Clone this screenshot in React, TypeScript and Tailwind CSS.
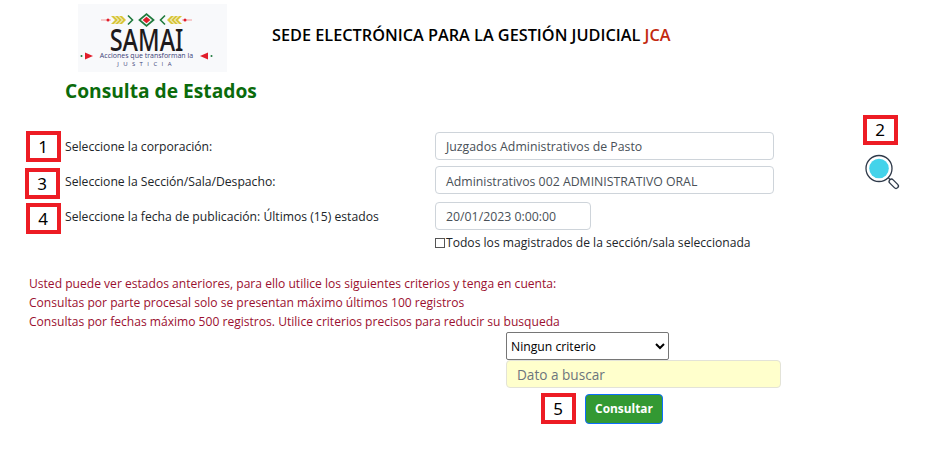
import React from 'react';

const FONT = "font-['Open_Sans','Noto_Sans',sans-serif]";

function NumBox({ n, className = '' }: { n: string; className?: string }) {
  return (
    <div className={`w-[35px] h-[31px] border-[4px] border-[#ed1c24] bg-white flex items-end justify-center shrink-0 text-[17px] leading-[24px] text-black font-['Noto_Sans',sans-serif] ${className}`}>
      <span className="translate-y-[1px] -translate-x-[0.5px]">{n}</span>
    </div>
  );
}

function Arrows({ flip = false }: { flip?: boolean }) {
  return (
    <svg width="33" height="12" viewBox="0 0 33 12" className={flip ? '-scale-x-100' : ''}>
      <path d="M0 6h10" stroke="#f29a9a" strokeWidth="1" />
      <circle cx="7" cy="6" r="1.500" fill="#e11d2a" />
      <path d="M10 2l4 4-4 4h3l4-4-4-4zM14 2l4 4-4 4h3l4-4-4-4zM18 2l4 4-4 4h3l4-4-4-4z" fill="#d9c63a" />
      <path d="M27 1.500l4.500 4.500-4.500 4.500" fill="none" stroke="#1f7a3d" strokeWidth="1.600" />
    </svg>
  );
}

function Logo() {
  return (
    <div className="w-[149px] h-[68px] bg-[#f8f9fb] flex flex-col items-center pt-[9px]">
      <div className="flex items-center h-[14px] gap-[3px] -translate-x-[6px]">
        <Arrows />
        <svg width="19" height="14" viewBox="0 0 20 15">
          <path d="M10 0l9 7.500-9 7.500-9-7.500z" fill="#1f7a3d" />
          <path d="M10 2.500l6 5-6 5-6-5z" fill="#f8f9fb" />
          <path d="M10 4l4.200 3.500L10 11 5.800 7.500z" fill="#e11d2a" />
        </svg>
        <Arrows flip />
      </div>
      <div className="text-[31px] leading-[26px] -mt-[1px] text-[#1d1a1c] font-medium font-['Noto_Sans',sans-serif] scale-x-[0.76] -translate-x-[6px]">SAMAI</div>
      <div className="flex items-center gap-[6px] h-[8px] -translate-x-[6px]">
        <svg width="14" height="8" viewBox="0 0 14 8">
          <circle cx="1.500" cy="4" r="1" fill="#1f7a3d" />
          <path d="M5 0.500l8 3.500-8 3.500z" fill="#e11d2a" />
        </svg>
        <span className="text-[7px] leading-[8px] text-[#3b3f78] whitespace-nowrap">Acciones que transforman la</span>
        <svg width="14" height="8" viewBox="0 0 14 8">
          <circle cx="12.500" cy="4" r="1" fill="#1f7a3d" />
          <path d="M9 0.500l-8 3.500 8 3.500z" fill="#e11d2a" />
        </svg>
      </div>
      <div className="text-[6px] leading-[7px] mt-[1px] tracking-[4.400px] text-[#3b3f78] -translate-x-[6px]">JUSTICIA</div>
    </div>
  );
}

function Magnifier() {
  return (
    <svg width="37" height="37" viewBox="0 0 37 37">
      <circle cx="15" cy="14.500" r="13" fill="#fff" stroke="#2f3a4a" strokeWidth="1.300" />
      <circle cx="15" cy="14.500" r="9.800" fill="#44d3ea" />
      <path d="M24.500 24l3 3" stroke="#2f3a4a" strokeWidth="1.300" />
      <path d="M27.500 27.500l4.500 4.500" stroke="#2f3a4a" strokeWidth="6" strokeLinecap="round" />
      <path d="M27.500 27.500l4.500 4.500" stroke="#fff" strokeWidth="3.400" strokeLinecap="round" />
    </svg>
  );
}

const rowClass = 'text-[12.170px] leading-[18px] text-[#212529]';
const inputClass = 'h-[28px] border border-[#ced4da] rounded-[4px] bg-white pl-[10px] flex items-center text-[12.300px] text-[#495057]';

export default function App() {
  return (
    <div className={`w-[936px] h-[449px] bg-white overflow-hidden pt-[4px] ${FONT}`}>
      {/* Header */}
      <header className="flex pl-[78px] h-[68px]">
        <Logo />
        <h1 className="ml-[45px] mt-[20px] text-[16.280px] leading-[22px] font-semibold text-black whitespace-nowrap">
          SEDE ELECTRÓNICA PARA LA GESTIÓN JUDICIAL <span className="text-[#c2290e]">JCA</span>
        </h1>
      </header>
      <h2 className="ml-[65px] mt-[4px] text-[19.200px] leading-[30px] font-bold text-[#0b6b0b]">Consulta de Estados</h2>

      {/* Form */}
      <div className="flex mt-[19px]">
        <div className="w-[435px] pl-[26px] shrink-0 pt-[6px]">
          <div className="flex items-start gap-[4px] h-[37px]">
            <NumBox n="1" />
            <span className={`${rowClass} mt-[7px]`}>Seleccione la corporación:</span>
          </div>
          <div className="flex items-start gap-[5px] h-[35px] -ml-[1px]">
            <NumBox n="3" />
            <span className={`${rowClass} mt-[5px]`}>Seleccione la Sección/Sala/Despacho:</span>
          </div>
          <div className="flex items-start gap-[4px]">
            <NumBox n="4" />
            <span className={`${rowClass} mt-[5px]`}>Seleccione la fecha de publicación: Últimos (15) estados</span>
          </div>
        </div>
        <div className="w-[339px] shrink-0 pt-[7px] flex flex-col">
          <div className={`${inputClass} pt-[3px]`}>Juzgados Administrativos de Pasto</div>
          <div className={`${inputClass} mt-[6px] pt-[4px]`}>Administrativos 002 ADMINISTRATIVO ORAL</div>
          <div className={`${inputClass} mt-[8px] w-[156px] pt-[3px]`}>20/01/2023 0:00:00</div>
          <div className="text-[12.120px] leading-[18px] text-[#212529] mt-[4px] flex items-center h-[18px] whitespace-nowrap">
            <span className="w-[10px] h-[10px] border border-[#555] bg-white mr-[1px]" />
            Todos los magistrados de la sección/sala seleccionada
          </div>
        </div>
        <div className="ml-[89px] -mt-[10px] flex flex-col">
          <NumBox n="2" className="!h-[30px]" />
          <div className="mt-[9px] ml-[1px]">
            <Magnifier />
          </div>
        </div>
      </div>

      {/* Aviso */}
      <div className="ml-[29px] mt-[22px] text-[12.080px] leading-[19px] text-[#9b1030]">
        <p>Usted puede ver estados anteriores, para ello utilice los siguientes criterios y tenga en cuenta:</p>
        <p>Consultas por parte procesal solo se presentan máximo últimos 100 registros</p>
        <p>Consultas por fechas máximo 500 registros. Utilice criterios precisos para reducir su busqueda</p>
      </div>

      {/* Busqueda */}
      <div className="ml-[506px] mt-[1px] w-[275px]">
        <select className="block w-[163px] h-[28px] border border-[#767676] rounded-[2px] bg-white text-[12.200px] text-black pt-[1px]" defaultValue="Ningun criterio">
          <option>Ningun criterio</option>
        </select>
        <input
          className="block w-[275px] h-[28px] border border-[#e3e3d8] rounded-[4px] bg-[#ffffcc] pl-[10px] text-[13.600px] placeholder:text-[#6c757d]"
          placeholder="Dato a buscar"
        />
        <div className="flex items-center ml-[35px] mt-[5px]">
          <NumBox n="5" />
          <button className="ml-[9px] w-[78px] h-[30px] rounded-[4px] bg-[#339933] border border-[#0d6efd] text-white text-[11.900px] font-bold">
            Consultar
          </button>
        </div>
      </div>
    </div>
  );
}
